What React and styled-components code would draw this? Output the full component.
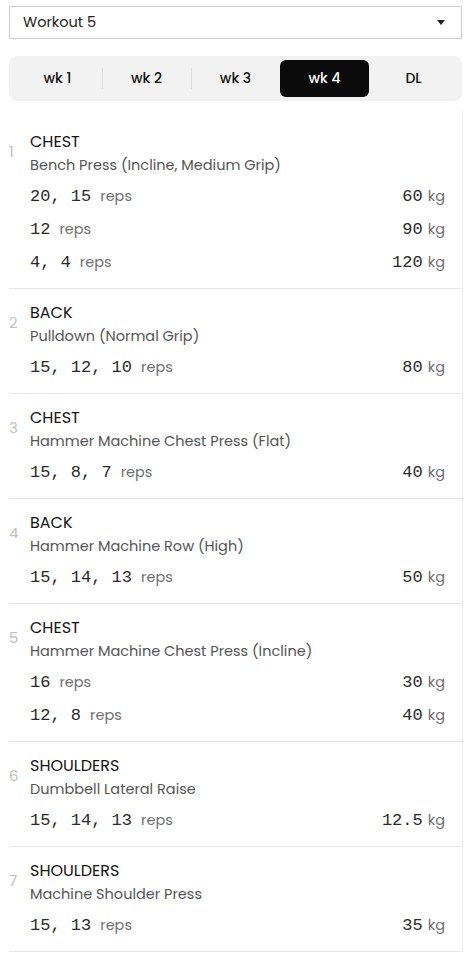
import React, {useState} from 'react';
import styled, {createGlobalStyle} from 'styled-components';

const GlobalStyle = createGlobalStyle`
  body {
    margin: 0;
    background: #ffffff;
    font-family: "Poppins", "Open Sans", "Liberation Sans", sans-serif;
    color: #111111;
  }
`;

const Page = styled.div`
  padding: 6px 9px 0 9px;
  width: 471px;
  box-sizing: border-box;
`;

const Select = styled.div`
  height: 33px;
  box-sizing: border-box;
  border: 1px solid #cfcfcf;
  display: flex;
  align-items: center;
  justify-content: space-between;
  padding: 0 16px 0 13px;
  font-size: 14.5px;
  color: #222222;
`;

const Caret = styled.span`
  width: 0;
  height: 0;
  border-left: 4.5px solid transparent;
  border-right: 4.5px solid transparent;
  border-top: 5px solid #222222;
`;

const Tabs = styled.div`
  margin-top: 17px;
  height: 45px;
  box-sizing: border-box;
  background: #f2f2f2;
  border-radius: 8px;
  padding: 4px;
  display: grid;
  grid-template-columns: repeat(5, 1fr);
`;

const Tab = styled.button`
  position: relative;
  border: none;
  border-radius: 6px;
  background: ${p => (p.$active ? '#0b0b0b' : 'transparent')};
  color: ${p => (p.$active ? '#ffffff' : '#111111')};
  font-family: inherit;
  font-size: 14px;
  font-weight: 500;
  cursor: pointer;
  padding: 0;
  &::before {
    content: '';
    display: ${p => (p.$divider ? 'block' : 'none')};
    position: absolute;
    left: 0;
    top: 8px;
    bottom: 8px;
    width: 1px;
    background: #dedede;
  }
`;

const List = styled.div`
  margin-top: 10px;
  padding-top: 7px;
  border-right: 1px solid #ececec;
  margin-right: -1px;
`;

const Row = styled.div`
  display: flex;
  padding: 12px 17px 10px 0;
  border-bottom: 1px solid #e6e6e6;
`;

const Index = styled.div`
  width: 21px;
  padding-top: 11px;
  font-size: 15px;
  line-height: 22px;
  color: #c2c2c2;
  flex-shrink: 0;
`;

const Body = styled.div`
  flex: 1;
`;

const Group = styled.div`
  font-size: 16px;
  line-height: 24px;
  color: #141414;
`;

const Name = styled.div`
  font-size: 14.5px;
  line-height: 22px;
  color: #555555;
  margin-bottom: 3px;
`;

const SetLine = styled.div`
  display: flex;
  justify-content: space-between;
  align-items: baseline;
  height: 33px;
  line-height: 33px;
`;

const Num = styled.span`
  font-family: "Liberation Mono", "DejaVu Sans Mono", monospace;
  font-size: 17px;
  color: #2a2a2a;
  margin-right: ${p => (p.$tight ? '5px' : '9px')};
`;

const Unit = styled.span`
  font-size: 14.5px;
  color: #707070;
`;

const workouts = [
  {group: 'CHEST', name: 'Bench Press (Incline, Medium Grip)', sets: [['20, 15', '60'], ['12', '90'], ['4, 4', '120']]},
  {group: 'BACK', name: 'Pulldown (Normal Grip)', sets: [['15, 12, 10', '80']]},
  {group: 'CHEST', name: 'Hammer Machine Chest Press (Flat)', sets: [['15, 8, 7', '40']]},
  {group: 'BACK', name: 'Hammer Machine Row (High)', sets: [['15, 14, 13', '50']]},
  {group: 'CHEST', name: 'Hammer Machine Chest Press (Incline)', sets: [['16', '30'], ['12, 8', '40']]},
  {group: 'SHOULDERS', name: 'Dumbbell Lateral Raise', sets: [['15, 14, 13', '12.5']]},
  {group: 'SHOULDERS', name: 'Machine Shoulder Press', sets: [['15, 13', '35']]},
];

const tabs = ['wk 1', 'wk 2', 'wk 3', 'wk 4', 'DL'];

const App = () => {
  const [active, setActive] = useState(3);

  return (
    <Page>
      <GlobalStyle />
      <Select>
        <span>Workout 5</span>
        <Caret />
      </Select>
      <Tabs>
        {tabs.map((t, i) => (
          <Tab
            key={t}
            $active={i === active}
            $divider={i > 0 && i !== active && i - 1 !== active}
            onClick={() => setActive(i)}
          >
            {t}
          </Tab>
        ))}
      </Tabs>
      <List>
        {workouts.map((w, i) => (
          <Row key={i}>
            <Index>{i + 1}</Index>
            <Body>
              <Group>{w.group}</Group>
              <Name>{w.name}</Name>
              {w.sets.map(([reps, kg], j) => (
                <SetLine key={j}>
                  <span>
                    <Num>{reps}</Num>
                    <Unit>reps</Unit>
                  </span>
                  <span>
                    <Num $tight>{kg}</Num>
                    <Unit>kg</Unit>
                  </span>
                </SetLine>
              ))}
            </Body>
          </Row>
        ))}
      </List>
    </Page>
  );
};

export default App;
